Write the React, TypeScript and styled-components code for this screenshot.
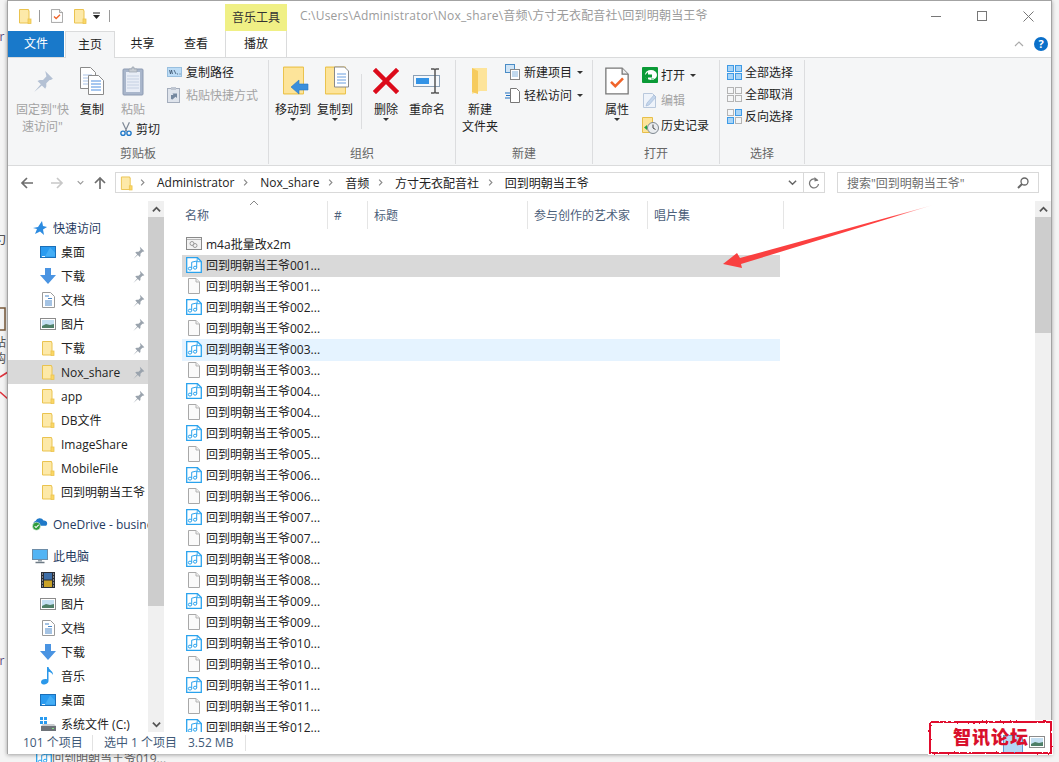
import React from "react";
import styled, { createGlobalStyle } from "styled-components";

const GlobalStyle = createGlobalStyle`
  html, body {
    margin: 0;
    padding: 0;
    background: #fff;
  }
  body {
    font-family: "Open Sans", "Noto Sans CJK SC", sans-serif;
    font-size: 12px;
    color: #222;
  }
`;

/* ---------- icons ---------- */

function FolderIcon({ w = 14, h = 16 }: { w?: number; h?: number }) {
  return (
    <svg width={w} height={h} viewBox="0 0 14 16">
      <path d="M1.500 1.500h9v1h.5v12.500h-9.500z" fill="#fde9a8" stroke="#eac34f" />
      <rect x="10" y="11" width="3" height="4.500" fill="#fbd766" stroke="#eac34f" strokeWidth="0.800" />
    </svg>
  );
}

function DocCheckIcon({ w = 12, h = 16 }: { w?: number; h?: number }) {
  return (
    <svg width={w} height={h} viewBox="0 0 28 32">
      <path d="M1 1h19l7 7v23H1z" fill="#fff" stroke="#777" strokeWidth="1.500" />
      <path d="M20 1v7h7" fill="#eee" stroke="#777" strokeWidth="1.500" />
      <path d="M7 17l5 5 9-9" fill="none" stroke="#f0642a" strokeWidth="3" />
    </svg>
  );
}

function PinIcon({ size = 13, color = "#9aa3ad" }: { size?: number; color?: string }) {
  return (
    <svg width={size} height={size} viewBox="0 0 20 20">
      <path d="M12 1l7 7-2 1-1 0-3 3 0 3-1 2-3-3-7 6 6-7-3-3 2-1 3 0 3-3 0-1z" fill={color} />
    </svg>
  );
}

function CopyIcon() {
  return (
    <svg width="26" height="30" viewBox="0 0 26 30">
      <path d="M1.500 1.500h10l5 5v16h-15z" fill="#fff" stroke="#8a8a8a" />
      <path d="M4 9h9M4 12h9M4 15h9M4 18h9" stroke="#a9c3e8" />
      <path d="M9.500 9.500h10l5 5v14h-15z" fill="#fff" stroke="#8a8a8a" />
      <path d="M12 15h10M12 18h10M12 21h10M12 24h10" stroke="#4f8fe0" />
    </svg>
  );
}

function PasteIcon() {
  return (
    <svg width="22" height="30" viewBox="0 0 22 30">
      <rect x="1" y="3" width="20" height="26" rx="1" fill="#a9b6cb" stroke="#8d9bb2" />
      <rect x="4" y="6" width="14" height="20" fill="#e8edf6" />
      <path d="M5 10h12M5 13h12M5 16h12M5 19h12M5 22h12" stroke="#c5d0e2" />
      <path d="M7 6V3h3V1h2v2h3v3z" fill="#c7ccd3" stroke="#9aa2ad" strokeWidth="0.700" />
    </svg>
  );
}

function ScissorsIcon() {
  return (
    <svg width="14" height="18" viewBox="0 0 14 18">
      <path d="M3 1l5 11M11 1L6 12" stroke="#7d8896" strokeWidth="1.400" fill="none" />
      <circle cx="3.500" cy="14" r="2.500" fill="none" stroke="#1f78c8" strokeWidth="1.600" />
      <circle cx="10.500" cy="14" r="2.500" fill="none" stroke="#1f78c8" strokeWidth="1.600" />
    </svg>
  );
}

function CopyPathIcon() {
  return (
    <svg width="15" height="10" viewBox="0 0 15 10">
      <rect x="0.500" y="0.500" width="14" height="9" fill="#bcdcf6" stroke="#98bfdf" />
      <path d="M2.500 3l1 4 1-4 1 4M7 3l2 4M10 7h1M12.500 7h1" stroke="#39506b" strokeWidth="0.800" fill="none" />
    </svg>
  );
}

function ShortcutPasteIcon() {
  return (
    <svg width="13" height="16" viewBox="0 0 13 16">
      <rect x="0.500" y="1.500" width="12" height="14" fill="#dfe4ec" stroke="#a4adbc" />
      <rect x="4" y="0" width="5" height="3" fill="#bfc6d1" />
      <path d="M4 12V8h2.500L5.500 6.500H10V11L8.500 9.700 5.500 12.500z" fill="#75889f" />
    </svg>
  );
}

function MoveToIcon({ copy }: { copy?: boolean }) {
  return (
    <svg width="32" height="30" viewBox="0 0 32 30">
      <path d="M6.500 1h20v27h-20z" fill="#fbd979" stroke="#eac34f" />
      <path d="M7 2h19v25H7z" fill="#fde49a" />
      {copy ? (
        <>
          <path d="M15.500 1h10l4 4v16h-14z" fill="#fff" stroke="#8a8a8a" />
          <path d="M18 8h9M18 11h9M18 14h9M18 17h9" stroke="#6b9fe0" />
        </>
      ) : (
        <path d="M14 21l8-7v4h9v6h-9v4z" fill="#3b8fdc" stroke="#2a78c2" strokeWidth="0.600" />
      )}
    </svg>
  );
}

function DeleteIcon() {
  return (
    <svg width="26" height="26" viewBox="0 0 26 26">
      <path d="M3 3l20 20M23 3L3 23" stroke="#dc0b1b" strokeWidth="4.500" strokeLinecap="square" />
    </svg>
  );
}

function RenameIcon() {
  return (
    <svg width="28" height="26" viewBox="0 0 28 26">
      <rect x="0.500" y="7.500" width="26" height="11" fill="#f4f8fc" stroke="#8ba0b6" />
      <rect x="3" y="10" width="13" height="6" fill="#3393e6" />
      <path d="M18 1h3l1 1 1-1h3M22 2v22M18 25h3l1-1 1 1h3" stroke="#555" strokeWidth="1.500" fill="none" />
    </svg>
  );
}

function NewFolderIcon() {
  return (
    <svg width="20" height="28" viewBox="0 0 20 28">
      <path d="M2 1h15v23H10l-8 3z" fill="#fde49a" />
      <path d="M2 1l6 3v23l-6-2z" fill="#f6cb5d" />
    </svg>
  );
}

function NewItemIcon() {
  return (
    <svg width="16" height="16" viewBox="0 0 16 16">
      <rect x="0.500" y="0.500" width="9" height="8" fill="#cfe4f6" stroke="#4a8cc6" />
      <rect x="5.500" y="5.500" width="9" height="10" fill="#fff" stroke="#888" />
      <path d="M7 8h6M7 10h6M7 12h6" stroke="#86b5df" />
    </svg>
  );
}

function EasyAccessIcon() {
  return (
    <svg width="16" height="16" viewBox="0 0 16 16">
      <path d="M5.500 1.500h6l3 3v11h-9z" fill="#fff" stroke="#777" />
      <path d="M0 6h5M1 8.500h4M0 11h5" stroke="#1e6fc0" strokeWidth="1.100" />
    </svg>
  );
}

function OpenIcon() {
  return (
    <svg width="16" height="16" viewBox="0 0 16 16">
      <rect width="16" height="16" rx="1" fill="#0a9a36" />
      <ellipse cx="9" cy="8" rx="6" ry="5" fill="#fff" />
      <path d="M2 9l4-4v2.500h4v3H6V13z" fill="#0a9a36" />
      <rect x="9" y="11" width="3" height="2" fill="#9bd4ac" />
    </svg>
  );
}

function EditIcon() {
  return (
    <svg width="16" height="17" viewBox="0 0 16 17">
      <path d="M1.500 1.500h9l3 3v11h-12z" fill="#eef3fa" stroke="#b9c8dc" />
      <path d="M4 14l1-3 7-8 2 2-7 8z" fill="#c4d6ec" stroke="#9fb6d2" strokeWidth="0.600" />
    </svg>
  );
}

function HistoryIcon() {
  return (
    <svg width="17" height="17" viewBox="0 0 17 17">
      <path d="M0.500 0.500h10v15h-10z" fill="#fde49a" stroke="#e7bf4a" />
      <circle cx="11" cy="11" r="5.500" fill="#e9ecef" stroke="#7d8790" />
      <path d="M11 7.500V11l2.500 1.500" stroke="#444" fill="none" />
      <path d="M2 10.500l3-2.500v5z" fill="#25a244" />
    </svg>
  );
}

function GridIcon({ mode }: { mode: "all" | "none" | "invert" }) {
  const on = "#a8d4f7";
  const cell = (x: number, y: number, active: boolean) => (
    <rect
      key={`${x}-${y}`}
      x={x + 0.5}
      y={y + 0.5}
      width="6"
      height="6"
      fill={active ? on : "#f5f6f7"}
      stroke={active ? "#3f9be6" : "#b4b4b4"}
    />
  );
  const states =
    mode === "all"
      ? [true, true, true, true]
      : mode === "none"
        ? [false, false, false, false]
        : [false, true, true, false];
  return (
    <svg width="16" height="16" viewBox="0 0 16 16">
      {cell(1, 1, states[0])}
      {cell(9, 1, states[1])}
      {cell(1, 9, states[2])}
      {cell(9, 9, states[3])}
    </svg>
  );
}

function MusicFileIcon() {
  return (
    <svg width="16" height="16" viewBox="0 0 16 16">
      <path d="M0.700 0.700h10.800l3.800 3.800v10.800H0.700z" fill="#fff" stroke="#2aa3ee" strokeWidth="1.300" />
      <path d="M11.200 0.800v3.900h3.900" fill="none" stroke="#2aa3ee" strokeWidth="0.900" />
      <path d="M5.700 11.500V5.200l5-1.200v6.500" fill="none" stroke="#2aa3ee" />
      <ellipse cx="4" cy="11.600" rx="1.700" ry="1.500" fill="none" stroke="#2aa3ee" />
      <ellipse cx="9.100" cy="10.700" rx="1.600" ry="1.500" fill="none" stroke="#2aa3ee" />
    </svg>
  );
}

function BlankFileIcon() {
  return (
    <svg width="16" height="16" viewBox="0 0 16 16">
      <path d="M2.500 0.500h7.500l3.500 3.500v11.500h-11z" fill="#fafafa" stroke="#a8a8a8" />
      <path d="M10 0.500V4h3.500" fill="#eee" stroke="#b5b5b5" />
    </svg>
  );
}

function ScriptIcon() {
  return (
    <svg width="16" height="16" viewBox="0 0 16 16">
      <rect x="0.500" y="1.500" width="15" height="12" fill="#f2f2f2" stroke="#8a8a8a" />
      <path d="M1 3.500h14" stroke="#b5b5b5" />
      <circle cx="6" cy="7.500" r="2" fill="none" stroke="#9a9a9a" />
      <circle cx="9" cy="9.500" r="2" fill="none" stroke="#9a9a9a" />
    </svg>
  );
}

function StarIcon() {
  return (
    <svg width="16" height="14" viewBox="0 0 16 14">
      <path d="M10 0l1 5 4 1-4 2.500L12 14 8 10.500 3 13l2-5-4-1 5-1z" fill="#2c8be0" />
    </svg>
  );
}

function DesktopIcon() {
  return (
    <svg width="16" height="12" viewBox="0 0 16 12">
      <rect x="0.500" y="0.500" width="15" height="11" fill="#2a9bf0" stroke="#1b6fb8" />
      <path d="M10 1.500l5 5v4H5z" fill="#45aef5" />
      <path d="M2 10.500h3" stroke="#e8f4fd" />
    </svg>
  );
}

function DownloadIcon() {
  return (
    <svg width="16" height="16" viewBox="0 0 16 16">
      <path d="M5 0h6v7h5l-8 9-8-9h5z" fill="#4a94e2" />
    </svg>
  );
}

function DocumentIcon() {
  return (
    <svg width="13" height="16" viewBox="0 0 13 16">
      <path d="M0.500 0.500h8l4 4v11h-12z" fill="#fff" stroke="#9a9a9a" />
      <path d="M3 4h4M6 6.500h4M3 9h7M3 11h7M3 13h7" stroke="#4a87c8" />
    </svg>
  );
}

function PictureIcon() {
  return (
    <svg width="16" height="12" viewBox="0 0 16 12">
      <rect x="0.500" y="0.500" width="15" height="11" fill="#fff" stroke="#8b8b8b" />
      <rect x="2" y="2" width="12" height="8" fill="#c4dff2" />
      <path d="M2 8l4-2 4 1 4-1v4H2z" fill="#4e7f67" />
    </svg>
  );
}

function VideoIcon() {
  return (
    <svg width="14" height="16" viewBox="0 0 14 16">
      <rect width="14" height="16" fill="#2b2f36" />
      <rect x="3" y="1" width="8" height="6.500" fill="#3f6fa8" />
      <rect x="3" y="8.500" width="8" height="6.500" fill="#c9a227" />
      <path d="M1 2h1M1 5h1M1 8h1M1 11h1M1 14h1M12 2h1M12 5h1M12 8h1M12 11h1M12 14h1" stroke="#ddd" />
    </svg>
  );
}

function MusicNoteIcon() {
  return (
    <svg width="14" height="18" viewBox="0 0 14 18">
      <path d="M6 0h1.500c.3 3 5 4 4.500 8-.8-2-3-3-4.500-3.200V14c0 2-2.500 3.500-5 3.500C1 17.500 0 16.500 0 15c0-2 3-3.500 6-2.700z" fill="#2b98ea" />
    </svg>
  );
}

function DriveIcon() {
  return (
    <svg width="16" height="16" viewBox="0 0 16 16">
      <rect x="0" y="1" width="3" height="3" fill="#2a9bf0" />
      <rect x="4" y="1" width="3" height="3" fill="#2a9bf0" />
      <rect x="0" y="5" width="3" height="3" fill="#2a9bf0" />
      <rect x="4" y="5" width="3" height="3" fill="#2a9bf0" />
      <rect x="1" y="10" width="15" height="5" fill="#6e7379" />
      <path d="M3 8h11l2 2H1z" fill="#c9ccd0" />
      <rect x="12" y="12" width="2" height="1" fill="#7fe07f" />
    </svg>
  );
}

function OneDriveIcon() {
  return (
    <svg width="18" height="16" viewBox="0 0 18 16">
      <path d="M3 10a3 3 0 0 1 1-5.500A5 5 0 0 1 13 4a3.500 3.500 0 0 1 3 6z" fill="#1f79c8" />
      <circle cx="5" cy="10.500" r="4.500" fill="#2e9c3c" stroke="#fff" strokeWidth="0.600" />
      <path d="M3 10.500l1.500 1.500 3-3" fill="none" stroke="#fff" strokeWidth="1.200" />
    </svg>
  );
}

function PcIcon() {
  return (
    <svg width="16" height="16" viewBox="0 0 16 16">
      <rect x="0.500" y="1.500" width="15" height="10" fill="#53b4f4" stroke="#6d8da8" />
      <path d="M6 12h4v1.500H6z" fill="#98a4ad" />
      <path d="M3.500 14.500h9" stroke="#6d7a85" strokeWidth="1.500" />
    </svg>
  );
}

function Chevron({ dir, size = 8, color = "#666", weight = 1.6 }: { dir: "left" | "right" | "up" | "down"; size?: number; color?: string; weight?: number }) {
  const paths = {
    right: "M3 1l4 4-4 4",
    left: "M7 1L3 5l4 4",
    up: "M1 7l4-4 4 4",
    down: "M1 3l4 4 4-4",
  };
  return (
    <svg width={size} height={size} viewBox="0 0 10 10">
      <path d={paths[dir]} fill="none" stroke={color} strokeWidth={weight} />
    </svg>
  );
}

function NavArrow({ dir, color }: { dir: "left" | "right" | "up"; color: string }) {
  const d = {
    left: "M13 7H2M7 2L2 7l5 5",
    right: "M1 7h11M7 2l5 5-5 5",
    up: "M7 13V2M2 7l5-5 5 5",
  };
  return (
    <svg width="14" height="14" viewBox="0 0 14 14">
      <path d={d[dir]} fill="none" stroke={color} strokeWidth="1.700" />
    </svg>
  );
}

/* ---------- layout ---------- */

const Stage = styled.div`
  position: relative;
  width: 1059px;
  height: 762px;
  overflow: hidden;
  background: #f4f4f4;
`;

const BehindText = styled.span<{ $left: number; $top: number; $color?: string }>`
  position: absolute;
  left: ${(p) => p.$left}px;
  top: ${(p) => p.$top}px;
  font-size: 12px;
  line-height: 14px;
  white-space: nowrap;
  color: ${(p) => p.$color || "#555"};
`;

const BehindFile = styled.div`
  position: absolute;
  left: 36px;
  top: 749px;
  display: flex;
  align-items: center;
  color: #666;
  white-space: nowrap;
`;

const BehindScrap = styled.svg`
  position: absolute;
  left: 0;
  top: 300px;
`;

const Window = styled.div`
  position: relative;
  z-index: 1;
  box-sizing: border-box;
  width: 1045px;
  height: 754px;
  margin-left: 7px;
  display: flex;
  flex-direction: column;
  background: #fff;
  border: 1px solid #a3a3a3;
  border-bottom: 0;
  box-shadow: 0 1px 4px rgba(0, 0, 0, 0.35);
`;

const TitleBar = styled.div`
  display: flex;
  height: 30px;
  flex: none;
`;

const QuickBar = styled.div`
  width: 217px;
  display: flex;
  align-items: center;
  padding: 0 0 0 10px;
  box-sizing: border-box;
`;

const QuickSlot = styled.div<{ $gap: number }>`
  display: flex;
  margin-right: ${(p) => p.$gap}px;
`;

const QuickSep = styled.div<{ $gap: number }>`
  width: 1px;
  height: 12px;
  background: #9a9a9a;
  margin-right: ${(p) => p.$gap}px;
`;

const ContextLabel = styled.div`
  width: 62px;
  height: 27px;
  align-self: flex-end;
  background: #f0f085;
  text-align: center;
  line-height: 27px;
  color: #333;
`;

const TitlePath = styled.div`
  margin-left: 13px;
  flex: 1;
  color: #9b9b9b;
  line-height: 30px;
  letter-spacing: 0.2px;
  white-space: nowrap;
`;

const ControlButton = styled.div`
  width: 46px;
  height: 30px;
  display: flex;
  align-items: center;
  justify-content: center;
`;

const TabRow = styled.div`
  display: flex;
  height: 26px;
  flex: none;
  align-items: stretch;
`;

const Tab = styled.div<{ $width: number; $active?: boolean; $file?: boolean; $context?: boolean }>`
  box-sizing: border-box;
  width: ${(p) => p.$width}px;
  margin-left: ${(p) => (p.$active ? 1 : 0)}px;
  text-align: center;
  line-height: 26px;
  color: ${(p) => (p.$file ? "#fff" : "#222")};
  background: ${(p) => (p.$file ? "#1979ca" : p.$active ? "#f5f6f7" : "transparent")};
  ${(p) =>
    p.$active
      ? `border: 1px solid #dadbdc; border-bottom: 0; height: 27px; position: relative; z-index: 1;`
      : ""}
  ${(p) => (p.$context ? `border-left: 1px solid #dadbdc; border-right: 1px solid #dadbdc; margin-left: 3px;` : "")}
`;

const TabSpacer = styled.div`
  flex: 1;
`;

const HelpArea = styled.div`
  display: flex;
  align-items: center;
  gap: 10px;
  padding-right: 3px;
`;

const HelpBadge = styled.div`
  width: 14px;
  height: 14px;
  border-radius: 50%;
  background: #0a6fc9;
  color: #fff;
  font-size: 11px;
  font-weight: 700;
  line-height: 14px;
  text-align: center;
`;

const Ribbon = styled.div`
  display: flex;
  flex: none;
  height: 109px;
  box-sizing: border-box;
  background: #f5f6f7;
  border-top: 1px solid #dadbdc;
  border-bottom: 1px solid #dadbdc;
`;

const Group = styled.div<{ $width: number }>`
  box-sizing: border-box;
  width: ${(p) => p.$width}px;
  height: 104px;
  margin-top: 2px;
  border-right: 1px solid #dcdddf;
  display: flex;
  flex-direction: column;
`;

const GroupBody = styled.div<{ $pad: number }>`
  flex: 1;
  display: flex;
  padding: 2px 0 0 ${(p) => p.$pad}px;
`;

const GroupLabel = styled.div`
  height: 19px;
  margin-bottom: 1px;
  text-align: center;
  line-height: 19px;
  color: #666;
`;

const LargeButton = styled.div<{ $width: number; $gap?: number; $disabled?: boolean }>`
  width: ${(p) => p.$width}px;
  margin-right: ${(p) => p.$gap || 0}px;
  flex: none;
  display: flex;
  flex-direction: column;
  align-items: center;
  color: ${(p) => (p.$disabled ? "#a3a3a3" : "#222")};
`;

const LargeIcon = styled.div`
  height: 39px;
  padding-bottom: 2px;
  box-sizing: border-box;
  display: flex;
  align-items: center;
  justify-content: center;
`;

const LargeLabel = styled.div`
  line-height: 17px;
  text-align: center;
  white-space: nowrap;
`;

const DropCaret = styled.div`
  width: 0;
  height: 0;
  border-left: 3px solid transparent;
  border-right: 3px solid transparent;
  border-top: 3px solid #333;
`;

const InlineCaret = styled(DropCaret)`
  margin-left: 5px;
`;

const PasteColumn = styled.div`
  width: 40px;
  margin-right: 7px;
  flex: none;
  display: flex;
  flex-direction: column;
`;

const CutRow = styled.div`
  display: flex;
  align-items: center;
  gap: 4px;
  margin-top: 2px;
  white-space: nowrap;
`;

const SmallColumn = styled.div<{ $spacing: number; $top: number }>`
  display: flex;
  flex-direction: column;
  gap: ${(p) => p.$spacing}px;
  padding-top: ${(p) => p.$top}px;
`;

const SmallAction = styled.div<{ $disabled?: boolean }>`
  display: flex;
  align-items: center;
  height: 18px;
  white-space: nowrap;
  color: ${(p) => (p.$disabled ? "#a3a3a3" : "#222")};
`;

const SmallIcon = styled.div`
  width: 19px;
  flex: none;
  display: flex;
  align-items: center;
`;

const OrganizeSep = styled.div`
  width: 1px;
  height: 55px;
  margin: 12px 11px 0 0;
  background: #dcdddf;
  flex: none;
`;

const AddressRow = styled.div`
  display: flex;
  flex: none;
  height: 32px;
  align-items: center;
  padding-top: 1px;
  box-sizing: border-box;
`;

const NavGroup = styled.div`
  width: 107px;
  padding-left: 12px;
  box-sizing: border-box;
  display: flex;
  align-items: center;
  flex: none;
`;

const NavSlot = styled.div<{ $width: number }>`
  width: ${(p) => p.$width}px;
  display: flex;
  justify-content: center;
  flex: none;
`;

const AddressBox = styled.div`
  width: 710px;
  height: 21px;
  box-sizing: border-box;
  border: 1px solid #d9d9d9;
  display: flex;
  align-items: center;
  flex: none;
  padding-left: 4px;
`;

const Crumbs = styled.div`
  flex: 1;
  display: flex;
  align-items: center;
  white-space: nowrap;
  color: #222;
`;

const CrumbChevron = styled.span<{ $first?: boolean }>`
  display: inline-flex;
  margin: 0 11px 0 ${(p) => (p.$first ? 6 : 7.75)}px;
`;

const AddressDrop = styled.div`
  width: 22px;
  display: flex;
  justify-content: center;
`;

const RefreshSlot = styled.div`
  width: 20px;
  height: 19px;
  border-left: 1px solid #d9d9d9;
  display: flex;
  align-items: center;
  justify-content: center;
`;

const SearchBox = styled.div`
  width: 202px;
  height: 21px;
  margin-left: 12px;
  box-sizing: border-box;
  border: 1px solid #d9d9d9;
  padding: 0 9px;
  display: flex;
  align-items: center;
  justify-content: space-between;
  color: #6d6d6d;
  flex: none;
`;

const Main = styled.div`
  flex: 1;
  min-height: 0;
  display: flex;
  padding-top: 3px;
  overflow: hidden;
`;

const Sidebar = styled.div`
  width: 140px;
  flex: none;
  padding-top: 15px;
  overflow: hidden;
`;

const NavRow = styled.div<{ $indent: number; $selected?: boolean; $section?: boolean; $blue?: boolean }>`
  display: flex;
  align-items: center;
  height: 24px;
  flex: none;
  box-sizing: border-box;
  padding-left: ${(p) => p.$indent}px;
  margin-top: ${(p) => (p.$section ? 8 : 0)}px;
  background: ${(p) => (p.$selected ? "#d9d9d9" : "transparent")};
  color: ${(p) => (p.$blue ? "#1f3a5f" : "#222")};
  white-space: nowrap;
  overflow: hidden;
`;

const NavIcon = styled.div`
  width: 16px;
  flex: none;
  margin-right: 5px;
  display: flex;
  justify-content: center;
`;

const NavLabel = styled.div`
  flex: 1;
  min-width: 0;
  overflow: hidden;
`;

const NavPin = styled.div`
  flex: none;
  padding: 0 3px 0 4px;
  display: flex;
`;

const ScrollTrack = styled.div`
  width: 16px;
  flex: none;
  background: #f0f0f0;
  display: flex;
  flex-direction: column;
`;

const ScrollButton = styled.div`
  height: 16px;
  flex: none;
  display: flex;
  align-items: center;
  justify-content: center;
`;

const ScrollThumb = styled.div<{ $height: number }>`
  height: ${(p) => p.$height}px;
  background: #cdcdcd;
  flex: none;
`;

const ScrollGap = styled.div`
  flex: 1;
`;

const FilePane = styled.div`
  position: relative;
  flex: 1;
  min-width: 0;
  overflow: hidden;
`;

const HeaderRow = styled.div`
  position: relative;
  display: flex;
  height: 28px;
  margin-left: 15px;
`;

const HeaderCell = styled.div<{ $width: number }>`
  box-sizing: border-box;
  width: ${(p) => p.$width}px;
  padding-left: 6px;
  line-height: 29px;
  color: #4c607a;
  border-right: 1px solid #e5e5e5;
  flex: none;
`;

const SortArrow = styled.div`
  position: absolute;
  left: 70px;
  top: -3px;
  display: flex;
`;

const FileList = styled.div`
  margin: 5px 0 0 18px;
  width: 598px;
`;

const FileRow = styled.div<{ $state?: "selected" | "hover" }>`
  display: flex;
  align-items: center;
  height: 21px;
  box-sizing: border-box;
  padding: 0 0 1px 4px;
  gap: 4px;
  white-space: nowrap;
  background: ${(p) =>
    p.$state === "selected" ? "#d9d9d9" : p.$state === "hover" ? "#e5f3ff" : "transparent"};
  box-shadow: ${(p) =>
    p.$state === "selected" ? "0 1px 0 #d9d9d9" : p.$state === "hover" ? "0 1px 0 #e5f3ff" : "none"};
`;

const FileIconBox = styled.div`
  width: 16px;
  height: 16px;
  display: flex;
`;

const StatusBar = styled.div`
  display: flex;
  align-items: center;
  flex: none;
  height: 22px;
  padding-left: 15px;
  color: #3f5a78;
  white-space: nowrap;
`;

const StatusItem = styled.div<{ $width: number; $sep?: boolean; $pad?: number }>`
  width: ${(p) => p.$width}px;
  flex: none;
  box-sizing: border-box;
  height: 16px;
  line-height: 16px;
  padding-left: ${(p) => p.$pad || 0}px;
  ${(p) => (p.$sep ? "border-right: 1px solid #e2e2e2;" : "")}
`;

const ArrowOverlay = styled.svg`
  position: absolute;
  left: 710px;
  top: 195px;
  z-index: 2;
`;

const Watermark = styled.div`
  position: absolute;
  left: 928px;
  top: 720px;
  width: 125px;
  height: 35px;
  box-sizing: border-box;
  z-index: 3;
  background: #fff;
  font-family: "Noto Sans CJK SC", sans-serif;
  font-weight: 900;
  font-size: 18px;
  line-height: 33px;
  letter-spacing: 1px;
  color: #d9102c;
  padding-left: 25px;
  white-space: nowrap;
`;

const WatermarkFrame = styled.svg`
  position: absolute;
  left: 0;
  top: 0;
`;

const WatermarkTile = styled.div`
  position: absolute;
  left: 75px;
  top: 15px;
  width: 20px;
  height: 18px;
  background: #b4d8f5;
  border: 1px solid #5b9bd5;
  box-sizing: border-box;
  z-index: -1;
`;

const WatermarkPicture = styled.div`
  position: absolute;
  left: 101px;
  top: 16px;
  display: flex;
`;

/* ---------- data ---------- */

const quickAccess = [
  { label: "桌面", icon: <DesktopIcon />, pin: true },
  { label: "下载", icon: <DownloadIcon />, pin: true },
  { label: "文档", icon: <DocumentIcon />, pin: true },
  { label: "图片", icon: <PictureIcon />, pin: true },
  { label: "下载", icon: <FolderIcon />, pin: true },
  { label: "Nox_share", icon: <FolderIcon />, pin: true, selected: true },
  { label: "app", icon: <FolderIcon />, pin: true },
  { label: "DB文件", icon: <FolderIcon /> },
  { label: "ImageShare", icon: <FolderIcon /> },
  { label: "MobileFile", icon: <FolderIcon /> },
  { label: "回到明朝当王爷", icon: <FolderIcon /> },
];

const thisPc = [
  { label: "视频", icon: <VideoIcon /> },
  { label: "图片", icon: <PictureIcon /> },
  { label: "文档", icon: <DocumentIcon /> },
  { label: "下载", icon: <DownloadIcon /> },
  { label: "音乐", icon: <MusicNoteIcon /> },
  { label: "桌面", icon: <DesktopIcon /> },
  { label: "系统文件 (C:)", icon: <DriveIcon /> },
];

const files = Array.from({ length: 23 }, (_, i) => {
  const n = String(Math.floor(i / 2) + 1).padStart(3, "0");
  return { name: `回到明朝当王爷${n}...`, music: i % 2 === 0 };
});

const crumbs = ["Administrator", "Nox_share", "音频", "方寸无衣配音社", "回到明朝当王爷"];

const columns = [
  { label: "名称", width: 149 },
  { label: "#", width: 40 },
  { label: "标题", width: 160 },
  { label: "参与创作的艺术家", width: 120 },
  { label: "唱片集", width: 136 },
];

export default function App(): React.ReactElement {
  return (
    <Stage>
      <GlobalStyle />
      <BehindText $left={-10} $top={30} $color="#5a4a7a">Sir</BehindText>
      <BehindText $left={-6} $top={233} $color="#333">勺</BehindText>
      <BehindText $left={-6} $top={336}>站</BehindText>
      <BehindText $left={-6} $top={352}>购</BehindText>
      <BehindText $left={-10} $top={654} $color="#5a4a7a">Sir</BehindText>
      <BehindScrap width="8" height="110" viewBox="0 0 8 110">
        <path d="M0 8h5v22H0" fill="none" stroke="#7a5a3a" strokeWidth="1.500" />
        <path d="M0 77l8-5M0 92l8 7" stroke="#e0353f" strokeWidth="1.500" />
      </BehindScrap>
      <BehindFile>
        <MusicFileIcon />
        回到明朝当王爷019...
      </BehindFile>

      <Window>
        <TitleBar>
          <QuickBar>
            <QuickSlot $gap={7}><FolderIcon /></QuickSlot>
            <QuickSep $gap={11} />
            <QuickSlot $gap={10}><DocCheckIcon /></QuickSlot>
            <QuickSlot $gap={6}><FolderIcon /></QuickSlot>
            <QuickSlot $gap={8}>
              <svg width="8" height="8" viewBox="0 0 8 8">
                <path d="M0 1h7" stroke="#222" />
                <path d="M0 3h7L3.500 7z" fill="#222" />
              </svg>
            </QuickSlot>
            <QuickSep $gap={0} />
          </QuickBar>
          <ContextLabel>音乐工具</ContextLabel>
          <TitlePath>C:\Users\Administrator\Nox_share\音频\方寸无衣配音社\回到明朝当王爷</TitlePath>
          <ControlButton>
            <svg width="10" height="1" viewBox="0 0 10 1"><path d="M0 .5h10" stroke="#777" /></svg>
          </ControlButton>
          <ControlButton>
            <svg width="10" height="10" viewBox="0 0 10 10"><rect x=".5" y=".5" width="9" height="9" fill="none" stroke="#777" /></svg>
          </ControlButton>
          <ControlButton>
            <svg width="11" height="11" viewBox="0 0 11 11"><path d="M.5.5l10 10M10.500.5l-10 10" stroke="#777" /></svg>
          </ControlButton>
        </TitleBar>

        <TabRow>
          <Tab $width={56} $file>文件</Tab>
          <Tab $width={50} $active>主页</Tab>
          <Tab $width={55}>共享</Tab>
          <Tab $width={52}>查看</Tab>
          <Tab $width={62} $context>播放</Tab>
          <TabSpacer />
          <HelpArea>
            <Chevron dir="up" size={10} color="#aaa" weight={1.200} />
            <HelpBadge>?</HelpBadge>
          </HelpArea>
        </TabRow>

        <Ribbon>
          <Group $width={261}>
            <GroupBody $pad={8}>
              <LargeButton $width={53} $gap={10} $disabled>
                <LargeIcon><PinIcon size={22} color="#b4c1d4" /></LargeIcon>
                <LargeLabel>固定到"快<br />速访问"</LargeLabel>
              </LargeButton>
              <LargeButton $width={26} $gap={15}>
                <LargeIcon><CopyIcon /></LargeIcon>
                <LargeLabel>复制</LargeLabel>
              </LargeButton>
              <PasteColumn>
                <LargeButton $width={26} $disabled>
                  <LargeIcon><PasteIcon /></LargeIcon>
                  <LargeLabel>粘贴</LargeLabel>
                </LargeButton>
                <CutRow><ScissorsIcon />剪切</CutRow>
              </PasteColumn>
              <SmallColumn $spacing={5} $top={1}>
                <SmallAction><SmallIcon><CopyPathIcon /></SmallIcon>复制路径</SmallAction>
                <SmallAction $disabled><SmallIcon><ShortcutPasteIcon /></SmallIcon>粘贴快捷方式</SmallAction>
              </SmallColumn>
            </GroupBody>
            <GroupLabel>剪贴板</GroupLabel>
          </Group>

          <Group $width={187}>
            <GroupBody $pad={6}>
              <LargeButton $width={36} $gap={6}>
                <LargeIcon><MoveToIcon /></LargeIcon>
                <LargeLabel>移动到</LargeLabel>
                <DropCaret />
              </LargeButton>
              <LargeButton $width={36} $gap={8}>
                <LargeIcon><MoveToIcon copy /></LargeIcon>
                <LargeLabel>复制到</LargeLabel>
                <DropCaret />
              </LargeButton>
              <OrganizeSep />
              <LargeButton $width={26} $gap={10}>
                <LargeIcon><DeleteIcon /></LargeIcon>
                <LargeLabel>删除</LargeLabel>
                <DropCaret />
              </LargeButton>
              <LargeButton $width={36}>
                <LargeIcon><RenameIcon /></LargeIcon>
                <LargeLabel>重命名</LargeLabel>
              </LargeButton>
            </GroupBody>
            <GroupLabel>组织</GroupLabel>
          </Group>

          <Group $width={137}>
            <GroupBody $pad={6}>
              <LargeButton $width={36} $gap={7}>
                <LargeIcon><NewFolderIcon /></LargeIcon>
                <LargeLabel>新建<br />文件夹</LargeLabel>
              </LargeButton>
              <SmallColumn $spacing={5} $top={1}>
                <SmallAction><SmallIcon><NewItemIcon /></SmallIcon>新建项目<InlineCaret /></SmallAction>
                <SmallAction><SmallIcon><EasyAccessIcon /></SmallIcon>轻松访问<InlineCaret /></SmallAction>
              </SmallColumn>
            </GroupBody>
            <GroupLabel>新建</GroupLabel>
          </Group>

          <Group $width={127}>
            <GroupBody $pad={11}>
              <LargeButton $width={26} $gap={12}>
                <LargeIcon><DocCheckIcon w={24} h={28} /></LargeIcon>
                <LargeLabel>属性</LargeLabel>
                <DropCaret />
              </LargeButton>
              <SmallColumn $spacing={7} $top={4}>
                <SmallAction><SmallIcon><OpenIcon /></SmallIcon>打开<InlineCaret /></SmallAction>
                <SmallAction $disabled><SmallIcon><EditIcon /></SmallIcon>编辑</SmallAction>
                <SmallAction><SmallIcon><HistoryIcon /></SmallIcon>历史记录</SmallAction>
              </SmallColumn>
            </GroupBody>
            <GroupLabel>打开</GroupLabel>
          </Group>

          <Group $width={85}>
            <GroupBody $pad={6}>
              <SmallColumn $spacing={4} $top={1}>
                <SmallAction><SmallIcon><GridIcon mode="all" /></SmallIcon>全部选择</SmallAction>
                <SmallAction><SmallIcon><GridIcon mode="none" /></SmallIcon>全部取消</SmallAction>
                <SmallAction><SmallIcon><GridIcon mode="invert" /></SmallIcon>反向选择</SmallAction>
              </SmallColumn>
            </GroupBody>
            <GroupLabel>选择</GroupLabel>
          </Group>
        </Ribbon>

        <AddressRow>
          <NavGroup>
            <NavSlot $width={14}><NavArrow dir="left" color="#6e6e6e" /></NavSlot>
            <NavSlot $width={16} />
            <NavSlot $width={14}><NavArrow dir="right" color="#c8c8c8" /></NavSlot>
            <NavSlot $width={10} />
            <NavSlot $width={12}><Chevron dir="down" size={7} color="#999" /></NavSlot>
            <NavSlot $width={7} />
            <NavSlot $width={14}><NavArrow dir="up" color="#6e6e6e" /></NavSlot>
          </NavGroup>
          <AddressBox>
            <FolderIcon w={13} h={16} />
            <Crumbs>
              <CrumbChevron $first><Chevron dir="right" size={7} color="#888" /></CrumbChevron>
              {crumbs.map((c, i) => (
                <React.Fragment key={c}>
                  {c}
                  {i < crumbs.length - 1 && (
                    <CrumbChevron><Chevron dir="right" size={7} color="#888" /></CrumbChevron>
                  )}
                </React.Fragment>
              ))}
            </Crumbs>
            <AddressDrop><Chevron dir="down" size={9} color="#666" /></AddressDrop>
            <RefreshSlot>
              <svg width="12" height="12" viewBox="0 0 12 12">
                <path d="M9.500 3.500A4.500 4.500 0 1 0 10.500 7" fill="none" stroke="#777" strokeWidth="1.300" />
                <path d="M6.500 0l4 3.500-4 1z" fill="#777" />
              </svg>
            </RefreshSlot>
          </AddressBox>
          <SearchBox>
            搜索"回到明朝当王爷"
            <svg width="12" height="12" viewBox="0 0 12 12">
              <circle cx="7.500" cy="4.500" r="3.500" fill="none" stroke="#666" strokeWidth="1.300" />
              <path d="M5 7l-4 4" stroke="#666" strokeWidth="2" />
            </svg>
          </SearchBox>
        </AddressRow>

        <Main>
          <Sidebar>
            <NavRow $indent={24} $blue>
              <NavIcon><StarIcon /></NavIcon>
              <NavLabel>快速访问</NavLabel>
            </NavRow>
            {quickAccess.map((item, i) => (
              <NavRow key={i} $indent={32} $selected={item.selected}>
                <NavIcon>{item.icon}</NavIcon>
                <NavLabel>{item.label}</NavLabel>
                {item.pin && <NavPin><PinIcon /></NavPin>}
              </NavRow>
            ))}
            <NavRow $indent={24} $section $blue>
              <NavIcon><OneDriveIcon /></NavIcon>
              <NavLabel>OneDrive - business</NavLabel>
            </NavRow>
            <NavRow $indent={24} $section $blue>
              <NavIcon><PcIcon /></NavIcon>
              <NavLabel>此电脑</NavLabel>
            </NavRow>
            {thisPc.map((item) => (
              <NavRow key={item.label} $indent={32}>
                <NavIcon>{item.icon}</NavIcon>
                <NavLabel>{item.label}</NavLabel>
              </NavRow>
            ))}
          </Sidebar>

          <ScrollTrack>
            <ScrollButton><Chevron dir="up" size={9} color="#555" weight={2} /></ScrollButton>
            <ScrollThumb $height={389} />
            <ScrollGap />
            <ScrollButton><Chevron dir="down" size={9} color="#555" weight={2} /></ScrollButton>
          </ScrollTrack>

          <FilePane>
            <HeaderRow>
              {columns.map((c) => (
                <HeaderCell key={c.label} $width={c.width}>{c.label}</HeaderCell>
              ))}
              <SortArrow><Chevron dir="up" size={10} color="#888" weight={1} /></SortArrow>
            </HeaderRow>
            <FileList>
              <FileRow>
                <FileIconBox><ScriptIcon /></FileIconBox>
                m4a批量改x2m
              </FileRow>
              {files.map((f, i) => (
                <FileRow key={i} $state={i === 0 ? "selected" : i === 4 ? "hover" : undefined}>
                  <FileIconBox>{f.music ? <MusicFileIcon /> : <BlankFileIcon />}</FileIconBox>
                  {f.name}
                </FileRow>
              ))}
            </FileList>
          </FilePane>

          <ScrollTrack>
            <ScrollButton><Chevron dir="up" size={9} color="#555" weight={2} /></ScrollButton>
            <ScrollThumb $height={116} />
            <ScrollGap />
          </ScrollTrack>
        </Main>

        <StatusBar>
          <StatusItem $width={70} $sep>101 个项目</StatusItem>
          <StatusItem $width={95} $pad={11}>选中 1 个项目</StatusItem>
          <StatusItem $width={58} $sep>3.52 MB</StatusItem>
        </StatusBar>
      </Window>

      <ArrowOverlay width="240" height="80" viewBox="0 0 240 80">
        <defs>
          <linearGradient id="arrowFade" x1="1" y1="0" x2="0" y2="0">
            <stop offset="0" stopColor="#ff4040" stopOpacity="0.1" />
            <stop offset="0.2" stopColor="#ff4040" />
            <stop offset="1" stopColor="#f84040" />
          </linearGradient>
        </defs>
        <polygon points="223,10 30,63 27,58 13,69 32,73 31,69" fill="url(#arrowFade)" />
      </ArrowOverlay>

      <Watermark>
        <WatermarkFrame width="125" height="35" viewBox="0 0 125 35">
          <defs>
            <filter id="roughEdge" x="-5%" y="-20%" width="110%" height="140%">
              <feTurbulence type="fractalNoise" baseFrequency="0.35" numOctaves="2" seed="4" />
              <feDisplacementMap in="SourceGraphic" scale="2.500" />
            </filter>
          </defs>
          <rect x="2" y="2" width="121" height="31" fill="none" stroke="#e0102f" strokeWidth="2" filter="url(#roughEdge)" />
        </WatermarkFrame>
        智讯论坛
        <WatermarkTile />
        <WatermarkPicture><PictureIcon /></WatermarkPicture>
      </Watermark>
    </Stage>
  );
}
